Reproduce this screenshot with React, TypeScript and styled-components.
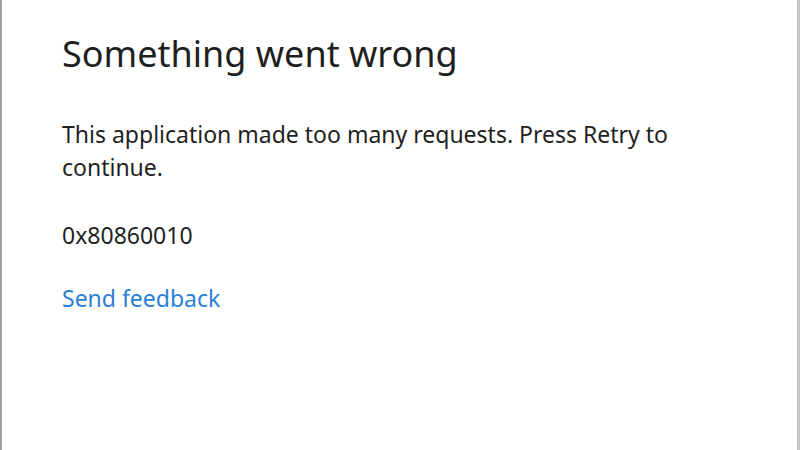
import React from "react";
import styled, { createGlobalStyle } from "styled-components";

const Global = createGlobalStyle`
  html, body { margin: 0; padding: 0; background: #fff; }
  body { font-family: "Segoe UI", "Noto Sans", "Open Sans", sans-serif; }
`;

const Frame = styled.div`
  width: 800px;
  height: 450px;
  box-sizing: border-box;
  background: #fff;
  border-left: 2px solid #a0a0a0;
  border-right: 3px solid #c4c4c4;
  padding: 30px 0 0 60px;
  display: flex;
  flex-direction: column;
  overflow: hidden;
`;

const Title = styled.h1`
  margin: 0;
  font-size: 36px;
  font-weight: 400;
  line-height: 48px;
  color: #1f1f1f;
`;

const Text = styled.p<{ $top: number }>`
  margin: ${(p) => p.$top}px 0 0;
  font-size: 23px;
  line-height: 33px;
  color: #1f1f1f;
  width: 640px;
`;

const Link = styled.a`
  margin-top: 30px;
  font-size: 23px;
  line-height: 33px;
  color: #2b7fd6;
  text-decoration: none;
  align-self: flex-start;
`;

export default function App() {
  return (
    <>
      <Global />
      <Frame>
        <Title>Something went wrong</Title>
        <Text $top={40}>This application made too many requests. Press Retry to continue.</Text>
        <Text $top={35}>0x80860010</Text>
        <Link href="#">Send feedback</Link>
      </Frame>
    </>
  );
}
